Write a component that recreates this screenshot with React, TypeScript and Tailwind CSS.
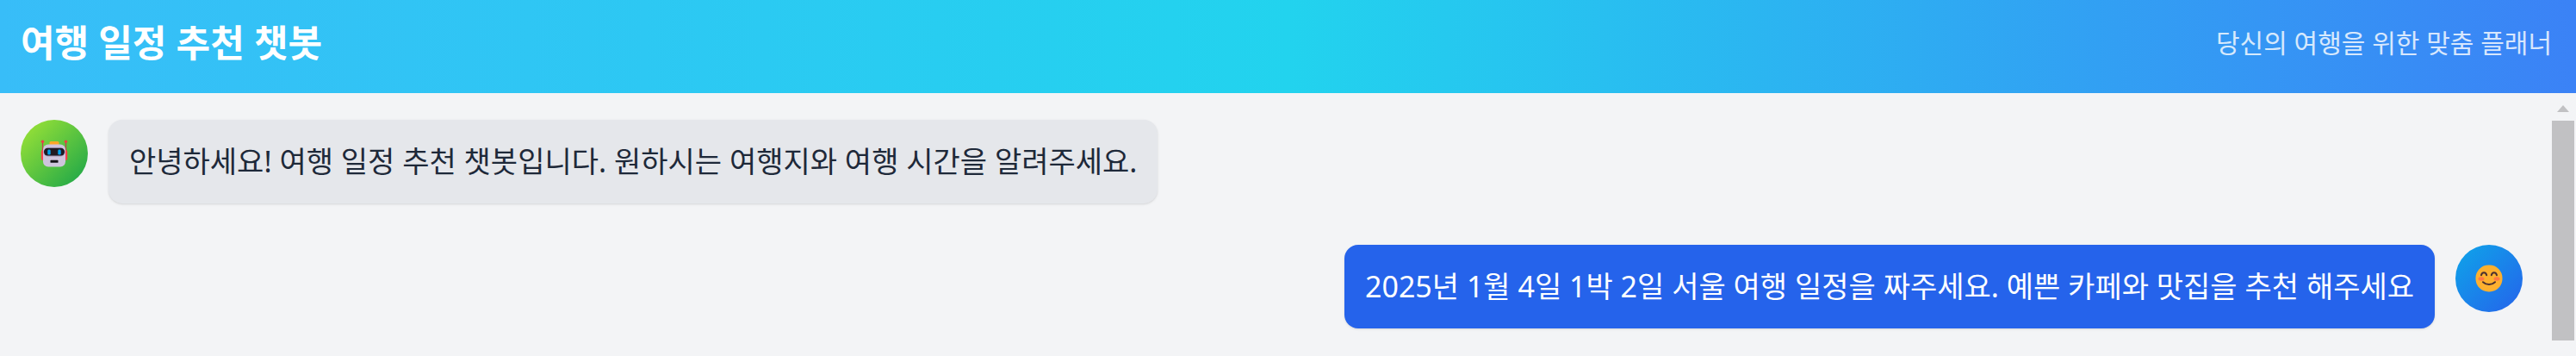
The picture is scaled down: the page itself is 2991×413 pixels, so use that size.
import type { ReactNode } from "react";

function RobotIcon() {
  return (
    <svg viewBox="0 0 32 32" className="size-8" aria-hidden="true">
      <path d="M2.5 3v11M29.5 3v11" stroke="#c43b52" strokeWidth="1.2" />
      <circle cx="2.5" cy="2.2" r="1.7" fill="#f23b46" />
      <circle cx="29.5" cy="2.2" r="1.7" fill="#f23b46" />
      <rect x="0.8" y="12" width="5" height="12" rx="2" fill="#f8414f" />
      <rect x="26.2" y="12" width="5" height="12" rx="2" fill="#f8414f" />
      <rect x="10.5" y="2" width="11" height="6" rx="1.5" fill="#ffa726" />
      <rect x="3" y="5.5" width="26" height="26" rx="6" fill="#cfc4dc" />
      <rect x="3.5" y="9.5" width="25" height="10" rx="5" fill="#9f95b3" />
      <rect x="4" y="9.8" width="24" height="8.6" rx="4.3" fill="#1f1a22" />
      <rect x="8.3" y="11.6" width="3.4" height="6" rx="1.4" fill="#00a3ee" />
      <rect x="20.3" y="11.6" width="3.4" height="6" rx="1.4" fill="#00a3ee" />
      <rect x="11.5" y="23.8" width="9" height="3" rx="0.6" fill="#151217" />
    </svg>
  );
}

function SmileIcon() {
  return (
    <svg viewBox="0 0 32 32" className="size-8" aria-hidden="true">
      <rect x="0.5" y="0.5" width="31" height="31" rx="15" fill="#fdb02f" />
      <ellipse cx="7" cy="16.5" rx="3.5" ry="2.2" fill="#ff7a45" />
      <ellipse cx="25" cy="16.5" rx="3.5" ry="2.2" fill="#ff7a45" />
      <path
        d="M7 12.2c.8-4 5.4-4 6.2 0M18.8 12.2c.8-4 5.4-4 6.2 0M9 20.3c4 3.7 10 3.7 14 0"
        fill="none"
        stroke="#4a3030"
        strokeWidth="2"
        strokeLinecap="round"
      />
    </svg>
  );
}

function Message({ from, children }: { from: "bot" | "user"; children: ReactNode }) {
  const bot = from === "bot";
  return (
    <li className={bot ? "flex items-start gap-6" : "flex flex-row-reverse items-start gap-6"}>
      <span
        className={
          bot
            ? "flex size-[78px] shrink-0 items-center justify-center rounded-full bg-linear-to-br/srgb from-[#a3e635] to-[#16a34a]"
            : "flex size-[78px] shrink-0 items-center justify-center rounded-full bg-linear-to-br/srgb from-[#0ea5e9] to-[#2563eb]"
        }
      >
        {bot ? <RobotIcon /> : <SmileIcon />}
      </span>
      <p
        className={
          bot
            ? "rounded-2xl bg-gray-200 px-6 py-6 text-[34px] leading-[49px] text-gray-800 shadow-sm"
            : "rounded-2xl bg-[#2563eb] px-6 py-6 text-[34px] leading-[49px] text-white shadow-sm"
        }
      >
        {children}
      </p>
    </li>
  );
}

export default function App() {
  return (
    <div className="flex min-h-screen flex-col bg-gray-100 font-['Noto_Sans','Noto_Sans_CJK_KR',sans-serif]">
      <header className="flex items-center justify-between bg-linear-to-r/srgb from-[#38bdf8] via-[#22d3ee] to-[#3b82f6] px-6 pt-5 pb-7 text-white">
        <h1 className="text-[43px] leading-[60px] font-bold">여행 일정 추천 챗봇</h1>
        <p className="pr-1 text-[30px] leading-[48px] opacity-80">당신의 여행을 위한 맞춤 플래너</p>
      </header>
      <main className="flex flex-1 pb-[18px]">
        <ul className="flex flex-1 flex-col gap-12 pt-[31px] pr-[34px] pl-6">
          <Message from="bot">
            안녕하세요! 여행 일정 추천 챗봇입니다. 원하시는 여행지와 여행 시간을 알려주세요.
          </Message>
          <Message from="user">
            2025년 1월 4일 1박 2일 서울 여행 일정을 짜주세요. 예쁜 카페와 맛집을 추천 해주세요
          </Message>
        </ul>
        <div className="flex w-7 flex-col pr-0.5" aria-hidden="true">
          <span className="flex h-8 items-center justify-center pt-1">
            <svg viewBox="0 0 14 8" className="h-2 w-3.5">
              <path d="M7 0 14 8H0Z" fill="#c1c1c3" />
            </svg>
          </span>
          <span className="flex-1 bg-[#c1c1c3]" />
        </div>
      </main>
    </div>
  );
}
